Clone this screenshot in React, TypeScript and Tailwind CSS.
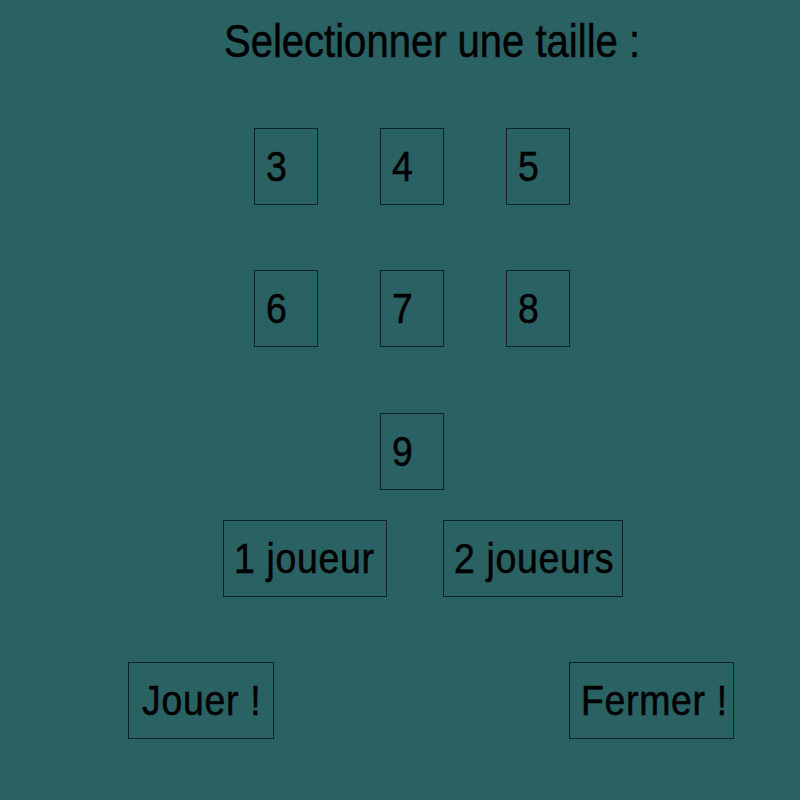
import React from 'react';

const Box = ({ label, w, pl = 'pl-[11px]' }: { label: string; w: string; pl?: string }) => (
  <div className={`${w} h-[77px] border border-[#0c2424] flex items-center ${pl}`}>
    <span className="inline-block origin-left scale-x-[0.87] text-[43px] leading-none tracking-[0.8px] text-black whitespace-nowrap [-webkit-text-stroke:0.5px_black]">
      {label}
    </span>
  </div>
);

const App = () => {
  const sizes = ['3', '4', '5', '6', '7', '8'];

  return (
    <div className="w-[800px] h-[800px] bg-[#2a6163] overflow-hidden font-['Liberation_Sans',Arial,sans-serif]">
      <div className="pt-[18px] pl-[224px]">
        <span className="inline-block origin-left scale-x-[0.87] text-[46px] leading-none text-black whitespace-nowrap [-webkit-text-stroke:0.5px_black]">
          Selectionner une taille :
        </span>
      </div>

      <div className="mt-[64px] ml-[254px] grid grid-cols-[64px_64px_64px] gap-x-[62px] gap-y-[65px]">
        {sizes.map((s) => (
          <Box key={s} label={s} w="w-[64px]" />
        ))}
      </div>

      <div className="mt-[66px] ml-[380px]">
        <Box label="9" w="w-[64px]" />
      </div>

      <div className="mt-[30px] ml-[223px] flex gap-[56px]">
        <Box label="1 joueur" w="w-[164px]" pl="pl-[10px]" />
        <Box label="2 joueurs" w="w-[180px]" pl="pl-[10px]" />
      </div>

      <div className="mt-[65px] ml-[128px] flex gap-[295px]">
        <Box label="Jouer !" w="w-[146px]" pl="pl-[13px]" />
        <Box label="Fermer !" w="w-[165px]" pl="pl-[11px]" />
      </div>
    </div>
  );
};

export default App;
